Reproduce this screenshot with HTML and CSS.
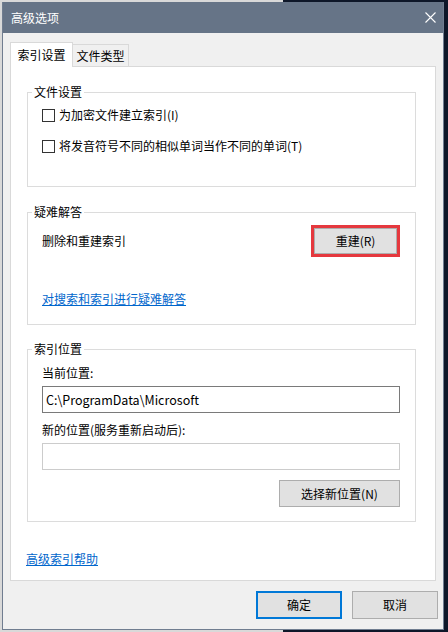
FILE: index.html
```html
<!DOCTYPE html>
<html lang="zh-CN">
<head>
<meta charset="utf-8">
<title>高级选项</title>
<link rel="stylesheet" href="styles.css">
</head>
<body>
<div class="window">
  <div class="titlebar">
    <span class="title">高级选项</span>
    <svg class="close" width="11" height="11" viewBox="0 0 11 11"><path d="M0.5 0.5 L10.5 10.5 M10.5 0.5 L0.5 10.5" stroke="#fff" stroke-width="1.1" fill="none"/></svg>
  </div>
  <div class="body-area">
    <div class="tabs">
      <div class="tab active">索引设置</div>
      <div class="tab">文件类型</div>
    </div>
    <div class="panel">
      <fieldset class="group g1">
        <legend>文件设置</legend>
        <div class="group-body g1-body">
          <label class="check"><span class="box"></span><span>为加密文件建立索引(I)</span></label>
          <label class="check"><span class="box"></span><span>将发音符号不同的相似单词当作不同的单词(T)</span></label>
        </div>
      </fieldset>
      <fieldset class="group g2">
        <legend>疑难解答</legend>
        <div class="group-body g2-body">
          <div class="rebuild-row">
            <span>删除和重建索引</span>
            <div class="highlight"><button class="btn btn-fill">重建(R)</button></div>
          </div>
          <a class="link" href="#">对搜索和索引进行疑难解答</a>
        </div>
      </fieldset>
      <fieldset class="group g3">
        <legend>索引位置</legend>
        <div class="group-body g3-body">
          <div class="field-label">当前位置:</div>
          <div class="input">C:\ProgramData\Microsoft</div>
          <div class="field-label second">新的位置(服务重新启动后):</div>
          <div class="input disabled"></div>
          <div class="select-row"><button class="btn select-btn">选择新位置(N)</button></div>
        </div>
      </fieldset>
      <a class="link help" href="#">高级索引帮助</a>
    </div>
  </div>
  <div class="footer">
    <button class="btn footer-btn default">确定</button>
    <button class="btn footer-btn">取消</button>
  </div>
</div>
</body>
</html>
```
FILE: styles.css
```css
* { box-sizing: border-box; }
html, body { margin: 0; padding: 0; }
body {
  width: 448px;
  height: 632px;
  overflow: hidden;
  background: linear-gradient(to right, #d9d9d9 0, #d9d9d9 283px, #0e1729 283px);
  font-family: "Noto Sans CJK SC", "Noto Sans", sans-serif;
  font-size: 12px;
  color: #000;
}
.window {
  margin: 2px 0 0 2px;
  width: 442px;
  height: 628px;
  border: 1px solid #707d90;
  border-top: none;
  background: #f0f0f0;
  display: flex;
  flex-direction: column;
}
.titlebar {
  height: 31px;
  flex: none;
  background: #667487;
  color: #fff;
  display: flex;
  align-items: center;
  justify-content: space-between;
  padding: 0 7px 0 8px;
  line-height: 16px;
}
.close { display: block; }
.body-area { padding: 9px 7px 0 7px; }
.tabs {
  display: flex;
  align-items: flex-end;
  height: 24px;
}
.tab {
  width: 56px;
  height: 22px;
  background: #f0f0f0;
  border: 1px solid #d9d9d9;
  border-left: none;
  border-bottom: none;
  display: flex;
  align-items: center;
  justify-content: center;
  line-height: 16px;
}
.tab.active {
  width: 63px;
  height: 25px;
  margin-bottom: -1px;
  background: #fff;
  border-left: 1px solid #d9d9d9;
  position: relative;
  z-index: 1;
  padding-bottom: 1px;
}
.panel {
  height: 515px;
  background: #fff;
  border: 1px solid #d9d9d9;
  padding: 17px 19px 0 16px;
  display: flex;
  flex-direction: column;
}
.group {
  margin: 0;
  padding: 0;
  border: 1px solid #dcdcdc;
  min-width: 0;
}
.group legend {
  margin-left: 4px;
  padding: 0 2px;
  line-height: 16px;
  height: 16px;
}
.group-body { padding: 0 15px 0 14px; }
.g1-body {
  padding-top: 5px;
  padding-bottom: 30px;
  display: flex;
  flex-direction: column;
  gap: 11px;
}
.check {
  display: flex;
  align-items: center;
  gap: 4px;
  height: 20px;
  line-height: 16px;
}
.box {
  width: 13px;
  height: 13px;
  border: 1px solid #333;
  background: #fff;
  flex: none;
  margin-top: 1px;
}
.g2 { margin-top: 17px; }
.g2-body {
  padding-top: 5px;
  padding-bottom: 17px;
  display: flex;
  flex-direction: column;
  align-items: flex-start;
}
.rebuild-row {
  align-self: stretch;
  height: 32px;
  display: flex;
  align-items: center;
  justify-content: space-between;
  line-height: 16px;
}
.highlight {
  width: 89px;
  height: 32px;
  border: 3px solid #e5383e;
  display: flex;
}
.btn {
  font-family: inherit;
  font-size: 12px;
  color: #000;
  background: #e1e1e1;
  border: 1px solid #adadad;
  padding: 0;
  margin: 0;
  line-height: 16px;
}
.btn-fill { flex: 1; }
.link {
  color: #0066cc;
  text-decoration: underline;
  line-height: 16px;
}
.g2-body .link { margin-top: 34px; }
.g3 { margin-top: 16px; }
.g3-body {
  padding-top: 8px;
  padding-bottom: 14px;
  display: flex;
  flex-direction: column;
}
.field-label { line-height: 16px; }
.field-label.second { margin-top: 9px; }
.input {
  margin-top: 5px;
  height: 27px;
  border: 1px solid #7a7a7a;
  background: #fff;
  padding: 0 3px;
  display: flex;
  align-items: center;
  font-size: 12.5px;
}
.input.disabled { border-color: #cccccc; }
.select-row {
  margin-top: 10px;
  display: flex;
  justify-content: flex-end;
}
.select-btn { width: 121px; height: 27px; }
.help { margin-top: 29px; margin-left: -1px; align-self: flex-start; }
.footer {
  display: flex;
  justify-content: flex-end;
  gap: 10px;
  padding: 10px 5px 0 0;
}
.footer-btn { width: 86px; height: 28px; }
.footer-btn.default { border: 2px solid #0078d7; }
```
